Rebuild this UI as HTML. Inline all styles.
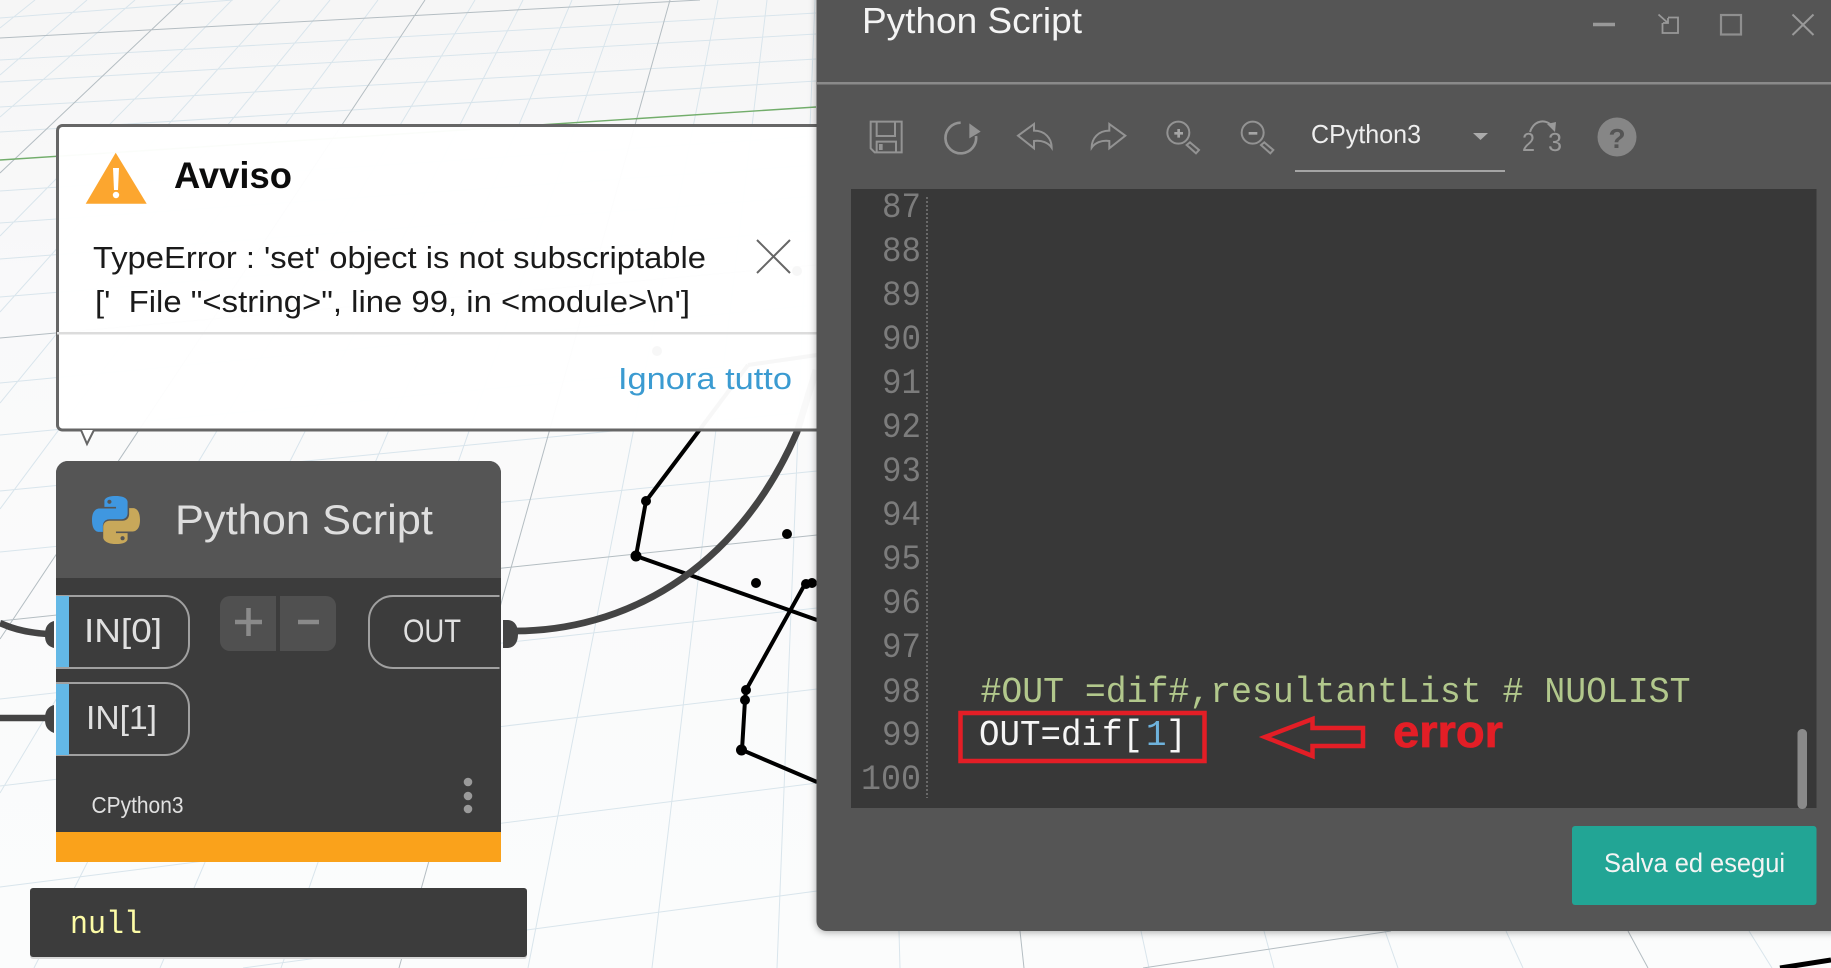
<!DOCTYPE html>
<html><head><meta charset="utf-8"><title>Python Script</title>
<style>
html,body{margin:0;padding:0;width:1831px;height:968px;overflow:hidden;background:#f9fafb}
svg{display:block}
text{font-family:"Liberation Sans",sans-serif;white-space:pre}
.m{font-family:"Liberation Mono",monospace}
.n{font-family:"Liberation Mono",monospace;font-size:35px;fill:#7c7c7c}
</style></head><body>
<svg xmlns="http://www.w3.org/2000/svg" width="1831" height="968" viewBox="0 0 1831 968">
<defs>
<linearGradient id="bg" x1="0" y1="0" x2="0" y2="1"><stop offset="0" stop-color="#f6f6f6"/><stop offset=".3" stop-color="#f9f9fa"/><stop offset="1" stop-color="#fbfcfc"/></linearGradient>
</defs>
<rect width="1831" height="968" fill="url(#bg)"/>
<!-- grid -->
<path fill="none" stroke="#d9e5ec" stroke-width="1" d="M0 18L233 0M0 60L816 13M0 82L816 34M0 107L816 59M0 132L816 81M0 191L816 136M0 223L816 165M0 259L816 196M0 297L816 230M0 383L816 305M0 435L816 358M0 491L817 411M0 552L817 471M0 699L817 608M0 786L817 689M0 887L817 783M243 968L817 891M35 0L0 28M87 0L0 75M135 0L0 117M232 0L0 236M280 0L0 312M330 0L0 403M378 0L0 509M475 0L0 793M523 0L34 968M572 0L160 968M620 0L281 968M718 0L528 968M767 0L652 968M815 0L777 968M899 931L900 968M1141 931L1149 968M1264 931L1274 968M1385 931L1398 968M1506 931L1523 968M1749 931L1772 968"/>
<path fill="none" stroke="#b4bdc2" stroke-width="1" d="M0 38L700 0M0 338L816 265M0 621L817 535M183 0L0 173M425 0L0 639M670 0L399 968M1020 931L1024 968M1628 931L1648 968M1391 931L1143 968"/>
<path fill="none" stroke="#72ad6b" stroke-width="1.400" d="M0 160L816 107"/>
<!-- geometry -->
<path fill="none" stroke="#000" stroke-width="4" d="M748 365L698 432L646 501L636 556L817 620M805 584L746 690L745 700L742 750L817 782M748 365L817 355"/>
<path fill="none" stroke="#000" stroke-width="5" d="M1780 968L1831 960"/>
<g fill="#000"><circle cx="646" cy="501" r="5"/><circle cx="636" cy="556" r="5.5"/><circle cx="787" cy="534" r="5"/><circle cx="756" cy="583" r="5"/><circle cx="806" cy="584" r="5"/><circle cx="812" cy="583" r="5"/><circle cx="746" cy="690" r="5"/><circle cx="745" cy="700" r="5"/><circle cx="741.500" cy="750" r="5.500"/><circle cx="657" cy="351" r="5"/><circle cx="797" cy="271" r="5"/></g>
<!-- wires -->
<path fill="none" stroke="#444" stroke-width="6.800" d="M515 631C620 631 735 575 797 432L816 370"/>
<path fill="#444" d="M503 620H507C514 620 518 625 518 634C518 643 514 648 507 648H503Z"/>
<path fill="none" stroke="#444" stroke-width="6.500" d="M0 623C15 630 30 633 48 634M0 718H48"/>
<path fill="#444" d="M54 621C47 623 45 628 45 635C45 642 47 646 54 648ZM54 705C47 707 45 712 45 719C45 726 47 730 54 733Z"/>
<!-- dialog -->
<rect x="57.500" y="125.500" width="800" height="304.500" rx="5" fill="#fff" fill-opacity=".97" stroke="#666" stroke-width="3"/>
<path d="M81 430L87 444L94 430" fill="#fff" stroke="#666" stroke-width="2"/>
<path d="M115.700 152.700L146.700 203.700H85.700Z" fill="#fca62f"/>
<path d="M113 168H119L118 190H114Z" fill="#fff"/><circle cx="116" cy="195" r="3.200" fill="#fff"/>
<text x="174" y="188" font-size="37" font-weight="700" fill="#0c0c0c" textLength="118" lengthAdjust="spacingAndGlyphs">Avviso</text>
<text x="93" y="268" font-size="31" fill="#1a1a1a" textLength="613" lengthAdjust="spacingAndGlyphs">TypeError : 'set' object is not subscriptable</text>
<text x="95" y="312" font-size="31" fill="#1a1a1a" textLength="595" lengthAdjust="spacingAndGlyphs">['  File "&lt;string&gt;", line 99, in &lt;module&gt;\n']</text>
<path d="M757 240L790 273M790 240L757 273" stroke="#666" stroke-width="2" fill="none"/>
<rect x="57" y="332" width="760" height="2.500" fill="#dcdcdc"/>
<text x="618" y="389" font-size="31" fill="#3b9bd1" textLength="174" lengthAdjust="spacingAndGlyphs">Ignora tutto</text>
<!-- node -->
<path d="M56 862V473a12 12 0 0 1 12-12H489a12 12 0 0 1 12 12V862Z" fill="#3c3c3c"/>
<path d="M56 578V473a12 12 0 0 1 12-12H489a12 12 0 0 1 12 12V578Z" fill="#555"/>
<rect x="56" y="832" width="445" height="30" fill="#faa21b"/>
<g transform="translate(92 496) scale(2)">
<path fill="#3f97e0" d="M11.914 0C5.82 0 6.2 2.656 6.2 2.656l.007 2.752h5.814v.826H3.9S0 5.789 0 11.969c0 6.18 3.403 5.96 3.403 5.96h2.03v-2.867s-.109-3.42 3.35-3.42h5.766s3.24.052 3.24-3.148V3.202S18.28 0 11.913 0zM8.708 1.85c.578 0 1.046.47 1.046 1.052 0 .581-.468 1.051-1.046 1.051-.579 0-1.046-.47-1.046-1.051 0-.582.467-1.052 1.046-1.052z"/>
<path fill="#c8a85a" d="M12.087 24c6.093 0 5.713-2.656 5.713-2.656l-.007-2.752h-5.814v-.826h8.121s3.9.445 3.9-5.735c0-6.18-3.403-5.96-3.403-5.96h-2.03v2.867s.109 3.42-3.35 3.42H8.85s-3.24-.052-3.24 3.148v5.292S5.72 24 12.087 24zm3.205-1.85c-.578 0-1.046-.47-1.046-1.052 0-.581.468-1.051 1.046-1.051.579 0 1.046.47 1.046 1.051 0 .582-.467 1.052-1.046 1.052z"/>
</g>
<text x="175" y="534" font-size="42" fill="#dedede" textLength="258" lengthAdjust="spacingAndGlyphs">Python Script</text>
<g fill="none" stroke="#a0a0a0" stroke-width="2">
<path d="M56 596H165a24 24 0 0 1 24 24V644a24 24 0 0 1-24 24H56"/>
<path d="M56 683H165a24 24 0 0 1 24 24V731a24 24 0 0 1-24 24H56"/>
<path d="M499.500 596H393a24 24 0 0 0-24 24V644a24 24 0 0 0 24 24H499.500"/>
</g>
<rect x="56" y="596" width="13" height="71" fill="#63b8e6"/>
<rect x="56" y="684" width="13" height="71" fill="#63b8e6"/>
<text x="84" y="642" font-size="33" fill="#e0e0e0" textLength="78" lengthAdjust="spacingAndGlyphs">IN[0]</text>
<text x="86" y="729" font-size="33" fill="#e0e0e0" textLength="71" lengthAdjust="spacingAndGlyphs">IN[1]</text>
<text x="403" y="642" font-size="32" fill="#e0e0e0" textLength="58" lengthAdjust="spacingAndGlyphs">OUT</text>
<path d="M220 606a10 10 0 0 1 10-10H276V651H230a10 10 0 0 1-10-10ZM280 596H326a10 10 0 0 1 10 10V641a10 10 0 0 1-10 10H280Z" fill="#505050"/>
<path d="M235 622H262M248.500 608V636M298 622H319" stroke="#8a8a8a" stroke-width="4.500" fill="none"/>
<text x="91.500" y="813" font-size="23" fill="#e0e0e0" textLength="92" lengthAdjust="spacingAndGlyphs">CPython3</text>
<g fill="#9a9a9a"><circle cx="468" cy="782" r="4.300"/><circle cx="468" cy="796" r="4.300"/><circle cx="468" cy="809" r="4.300"/></g>
<!-- null bubble -->
<rect x="30" y="889" width="497" height="70" rx="3" fill="#d8d8d8"/>
<rect x="30" y="888" width="497" height="69" rx="3" fill="#3c3c3c"/>
<text class="m" x="70" y="933" font-size="32" fill="#fdfca6" textLength="72" lengthAdjust="spacingAndGlyphs">null</text>
<!-- python panel -->
<path d="M816.500 -10H1840V931H826a10 10 0 0 1-9.500-10Z" fill="#555" style="filter:drop-shadow(0 1px 4px rgba(0,0,0,.35))"/>
<text x="862" y="33" font-size="36" fill="#f4f4f4" textLength="220" lengthAdjust="spacingAndGlyphs">Python Script</text>
<g fill="none" stroke="#999" stroke-width="2">
<path d="M1593 24.500H1615" stroke-width="3.500"/>
<path d="M1668 17.500H1678V33H1662.500V23M1658.500 14.500L1668 23M1668 18V23H1663" stroke-width="1.800"/>
<rect x="1721" y="15" width="20" height="19.500" stroke="#8f8f8f" stroke-width="2.200"/>
<path d="M1792.500 14.500L1813.500 35M1813.500 14.500L1792.500 35"/>
</g>
<rect x="817" y="82" width="1014" height="2.500" fill="#8a8a8a"/>
<g transform="translate(840 100) scale(.33333)" fill="none" stroke="#939393" stroke-width="6">
<path d="M92 65H185V157H104L92 145Z"/><path d="M110 65V108H165V65M110 157V125H168V157"/>
<rect x="117" y="132" width="11" height="18" fill="#939393" stroke="none"/>
<path d="M362 68A46 46 0 1 0 408 108" stroke-width="8"/>
<path d="M388 70L422 95L388 115Z" fill="#939393" stroke="none"/>
<path d="M582 72L534 107L582 145V123C605 120 625 128 635 143C635 115 615 92 582 92Z"/>
<path d="M808 72L856 107L808 145V123C785 120 765 128 755 143C755 115 775 92 808 92Z"/>
<circle cx="1015" cy="98" r="33"/><path d="M1050 127L1077 150L1068 160L1040 135Z"/>
<path d="M1003 100H1029M1016 87V113" stroke="#a5a5a5" stroke-width="8"/>
<circle cx="1238" cy="98" r="33"/><path d="M1273 127L1300 150L1291 160L1263 135Z"/>
<path d="M1226 100H1252" stroke="#a5a5a5" stroke-width="8"/>
</g>
<text x="1311" y="143" font-size="26" fill="#eee" textLength="110" lengthAdjust="spacingAndGlyphs">CPython3</text>
<path d="M1473 133H1488L1480.500 140Z" fill="#ababab"/>
<rect x="1295" y="170" width="210" height="2" fill="#a5a5a5"/>
<text x="1522" y="151" font-size="26" fill="#999" textLength="13" lengthAdjust="spacingAndGlyphs">2</text>
<text x="1548" y="151" font-size="26" fill="#999" textLength="14" lengthAdjust="spacingAndGlyphs">3</text>
<path d="M1530 132C1534 120 1546 118 1553 127" fill="none" stroke="#999" stroke-width="2"/>
<path d="M1547 124L1556 122L1555 132Z" fill="#999"/>
<circle cx="1617" cy="137" r="19.500" fill="#868686"/>
<text x="1617" y="148" font-size="28" font-weight="700" fill="#555" text-anchor="middle">?</text>
<!-- editor -->
<rect x="851" y="189" width="965.500" height="619" fill="#383838"/>
<svg x="851" y="189" width="966" height="619">
<g transform="translate(-851 -189)">
<text class="n" x="882" y="217" textLength="39" lengthAdjust="spacingAndGlyphs">87</text><text class="n" x="882" y="261" textLength="39" lengthAdjust="spacingAndGlyphs">88</text><text class="n" x="882" y="305" textLength="39" lengthAdjust="spacingAndGlyphs">89</text><text class="n" x="882" y="349" textLength="39" lengthAdjust="spacingAndGlyphs">90</text><text class="n" x="882" y="393" textLength="39" lengthAdjust="spacingAndGlyphs">91</text><text class="n" x="882" y="437" textLength="39" lengthAdjust="spacingAndGlyphs">92</text><text class="n" x="882" y="481" textLength="39" lengthAdjust="spacingAndGlyphs">93</text><text class="n" x="882" y="525" textLength="39" lengthAdjust="spacingAndGlyphs">94</text><text class="n" x="882" y="569" textLength="39" lengthAdjust="spacingAndGlyphs">95</text><text class="n" x="882" y="613" textLength="39" lengthAdjust="spacingAndGlyphs">96</text><text class="n" x="882" y="657" textLength="39" lengthAdjust="spacingAndGlyphs">97</text><text class="n" x="882" y="702" textLength="39" lengthAdjust="spacingAndGlyphs">98</text><text class="n" x="882" y="745" textLength="39" lengthAdjust="spacingAndGlyphs">99</text><text class="n" x="861" y="789" textLength="60" lengthAdjust="spacingAndGlyphs">100</text>
</g>
</svg>
<path d="M927 197V798" stroke="#8a8a8a" stroke-width="1.200" stroke-dasharray="2 2" fill="none"/>
<text class="m" x="980.500" y="702" font-size="36" fill="#b2c88c" textLength="710" lengthAdjust="spacingAndGlyphs">#OUT =dif#,resultantList # NUOLIST</text>
<text class="m" x="979" y="745" font-size="36" fill="#f6f6f6" textLength="164" lengthAdjust="spacingAndGlyphs">OUT=dif[</text>
<text class="m" x="1146" y="745" font-size="36" fill="#6eb2dc" textLength="20.500" lengthAdjust="spacingAndGlyphs">1</text>
<text class="m" x="1166" y="745" font-size="36" fill="#f6f6f6" textLength="20.500" lengthAdjust="spacingAndGlyphs">]</text>
<rect x="960.500" y="713" width="244" height="48" fill="none" stroke="#e31e26" stroke-width="4.500"/>
<path d="M1265 737L1312.500 719V728H1363V746H1312.500V756Z" fill="none" stroke="#e31e26" stroke-width="4.500"/>
<text x="1393" y="747" font-size="45" font-weight="700" fill="#e31e26" stroke="#e31e26" stroke-width=".8" textLength="110" lengthAdjust="spacingAndGlyphs">error</text>
<rect x="1797.500" y="729" width="9.500" height="80" rx="4.500" fill="#8a8a8a"/>
<rect x="1572" y="826" width="244.500" height="79" rx="3" fill="#22a595"/>
<text x="1604" y="872" font-size="27" fill="#f4f4f4" textLength="181" lengthAdjust="spacingAndGlyphs">Salva ed esegui</text>
</svg>
</body></html>
